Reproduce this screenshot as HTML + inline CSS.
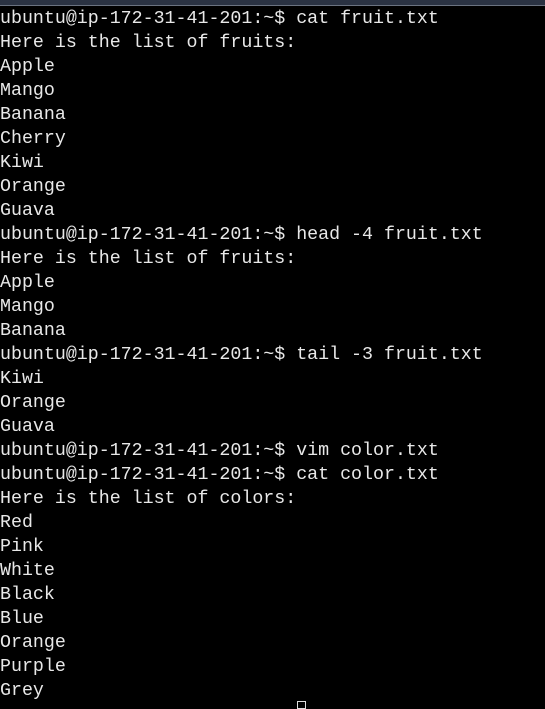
<!DOCTYPE html><html><head><style>
html,body{margin:0;background:#000;width:545px;height:706px;overflow:hidden}
.top{position:absolute;left:0;top:0;width:545px;height:5px;background:#2a3242;border-bottom:1px solid #6a7280}
pre{position:absolute;left:0;top:7px;margin:0;font-family:"Liberation Mono",monospace;font-size:18.3px;line-height:24px;color:#e8e8e8}
.cur{position:absolute;left:297px;top:701px;width:9px;height:8px;border:1px solid #ddd;box-sizing:border-box}
</style></head><body><div class="top"></div><pre>ubuntu@ip-172-31-41-201:~$ cat fruit.txt
Here is the list of fruits:
Apple
Mango
Banana
Cherry
Kiwi
Orange
Guava
ubuntu@ip-172-31-41-201:~$ head -4 fruit.txt
Here is the list of fruits:
Apple
Mango
Banana
ubuntu@ip-172-31-41-201:~$ tail -3 fruit.txt
Kiwi
Orange
Guava
ubuntu@ip-172-31-41-201:~$ vim color.txt
ubuntu@ip-172-31-41-201:~$ cat color.txt
Here is the list of colors:
Red
Pink
White
Black
Blue
Orange
Purple
Grey</pre><div class="cur"></div></body></html>
